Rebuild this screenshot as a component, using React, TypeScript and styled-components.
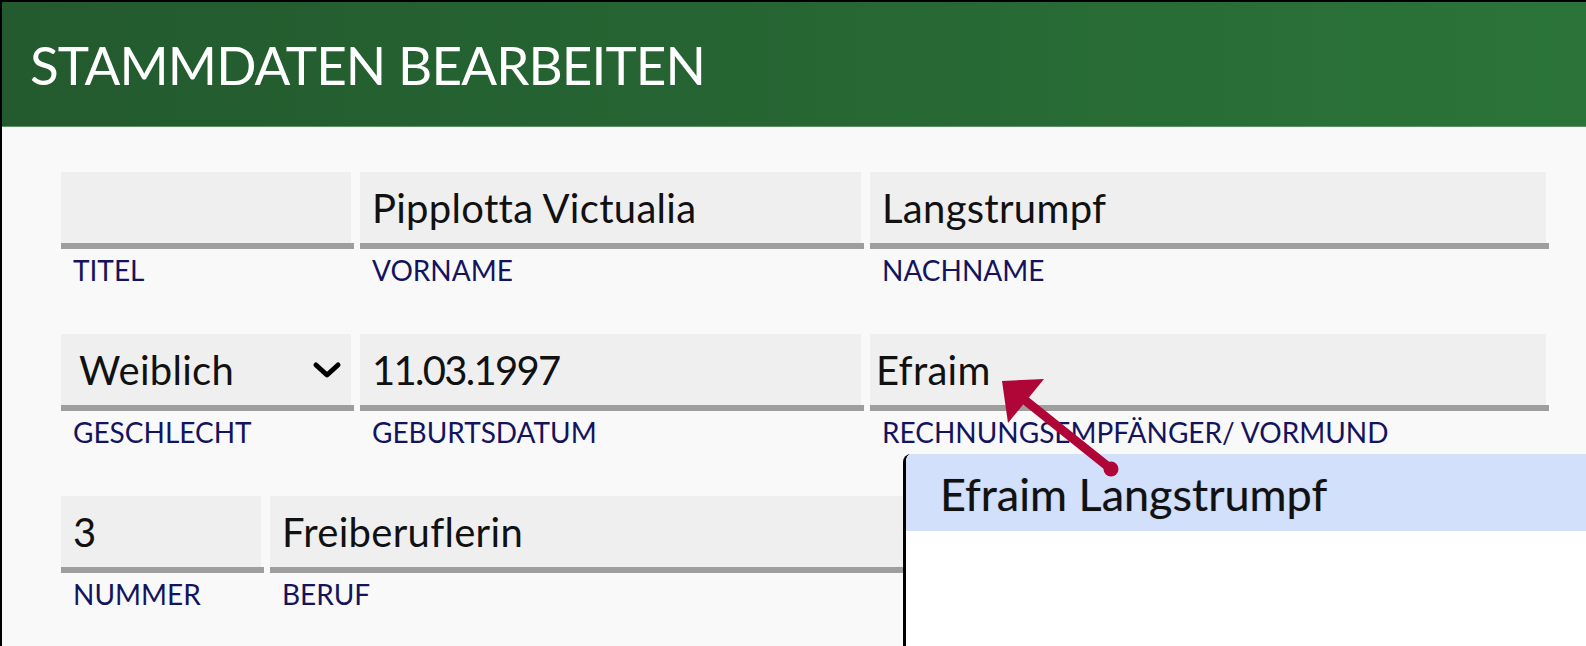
import React from "react";
import styled, { createGlobalStyle } from "styled-components";

const GlobalStyle = createGlobalStyle`
  html, body {
    margin: 0;
    padding: 0;
    background: #f9f9f9;
  }
  body {
    font-family: Lato, "Open Sans", sans-serif;
    overflow: hidden;
  }
  * { box-sizing: border-box; }
`;

const Page = styled.div`
  position: relative;
  width: 1586px;
  height: 646px;
  border-top: 2px solid #000;
  border-left: 2px solid #000;
  background: #f9f9f9;
  overflow: hidden;
`;

const Header = styled.header`
  height: 125px;
  display: flex;
  align-items: center;
  padding-left: 28px;
  background: linear-gradient(90deg, #235a2e 0%, #266633 50%, #2b7439 100%);
  border-bottom: 1px solid #5f8f67;
`;

const Title = styled.h1`
  margin: 0;
  font-family: Lato, sans-serif;
  font-weight: 400;
  font-size: 53px;
  line-height: 1;
  color: #ffffff;
  letter-spacing: -0.9px;
`;

const Form = styled.div`
  padding: 45px 37px 0 59px;
  display: flex;
  flex-direction: column;
`;

const Row = styled.div<{ $cols: string }>`
  display: grid;
  grid-template-columns: ${(p) => p.$cols};
  column-gap: 6px;
  height: 162px;
`;

const Field = styled.div`
  display: flex;
  flex-direction: column;
  min-width: 0;
`;

const Box = styled.div<{ $pad?: number; $tight?: boolean }>`
  height: 71px;
  margin-right: 3px;
  background: #efefef;
  display: flex;
  align-items: center;
  justify-content: space-between;
  padding-left: ${(p) => p.$pad ?? 12}px;
  padding-right: 10px;
  font-size: 40px;
  letter-spacing: ${(p) => (p.$tight ? "-1.7px" : "0.3px")};
  color: #111;
  white-space: nowrap;
  overflow: hidden;
`;

const Underline = styled.div`
  height: 6px;
  background: #9e9e9e;
`;

const Label = styled.div`
  padding-left: 12px;
  padding-top: 6px;
  font-size: 28px;
  line-height: 30px;
  color: #14145e;
  white-space: nowrap;
`;

const Chevron = styled.svg`
  width: 30px;
  height: 20px;
  flex: none;
  margin-right: -1px;
`;

const Popup = styled.div`
  position: absolute;
  left: 901px;
  top: 452px;
  right: 0;
  bottom: 0;
  background: #ffffff;
  border-left: 3px solid #000;
  border-top-left-radius: 8px;
  overflow: hidden;
`;

const Option = styled.div`
  height: 77px;
  background: #d3e0fc;
  display: flex;
  align-items: center;
  padding-left: 34px;
  padding-top: 3px;
  font-size: 45px;
  color: #111;
  text-shadow: 0 0 1px rgba(0, 0, 0, 0.35);
`;

const ArrowLayer = styled.svg`
  position: absolute;
  left: -2px;
  top: -2px;
  width: 1586px;
  height: 646px;
  pointer-events: none;
`;

type F = { label: string; value?: string; pad?: number; select?: boolean; tight?: boolean };

const FieldView = ({ label, value, pad, select, tight }: F) => (
  <Field>
    <Box $pad={pad} $tight={tight}>
      <span>{value ?? ""}</span>
      {select && (
        <Chevron viewBox="0 0 30 20">
          <path d="M4 5 L15 15 L26 5" fill="none" stroke="#000" strokeWidth="5" strokeLinecap="round" strokeLinejoin="round" />
        </Chevron>
      )}
    </Box>
    <Underline />
    <Label>{label}</Label>
  </Field>
);

export default function App() {
  return (
    <>
      <GlobalStyle />
      <Page>
        <Header>
          <Title>STAMMDATEN BEARBEITEN</Title>
        </Header>
        <Form>
          <Row $cols="293px 504px 1fr">
            <FieldView label="TITEL" />
            <FieldView label="VORNAME" value="Pipplotta Victualia" />
            <FieldView label="NACHNAME" value="Langstrumpf" />
          </Row>
          <Row $cols="293px 504px 1fr">
            <FieldView label="GESCHLECHT" value="Weiblich" pad={18} select />
            <FieldView label="GEBURTSDATUM" value="11.03.1997" tight />
            <FieldView label="RECHNUNGSEMPFÄNGER/ VORMUND" value="Efraim" pad={6} />
          </Row>
          <Row $cols="203px 1fr">
            <FieldView label="NUMMER" value="3" />
            <FieldView label="BERUF" value="Freiberuflerin" />
          </Row>
        </Form>
        <Popup>
          <Option>Efraim Langstrumpf</Option>
        </Popup>
        <ArrowLayer viewBox="0 0 1586 646">
          <line x1="1111" y1="469" x2="1016" y2="393" stroke="#b00537" strokeWidth="9" strokeLinecap="round" />
          <polygon points="1002,381 1044,379 1008,423" fill="#b00537" />
          <circle cx="1111" cy="469" r="7.5" fill="#b00537" />
        </ArrowLayer>
      </Page>
    </>
  );
}
